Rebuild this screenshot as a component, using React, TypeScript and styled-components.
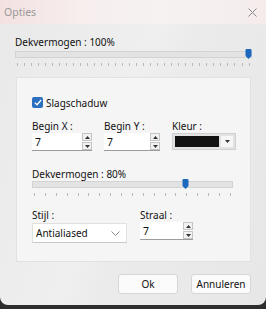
import styled, { createGlobalStyle } from 'styled-components';

const GlobalStyle = createGlobalStyle`
	html, body {
		margin: 0;
		padding: 0;
		background: #2e2e2e;
	}
	body {
		font-family: 'Noto Sans', 'Open Sans', sans-serif;
		font-size: 10px;
		color: #111111;
	}
`;

const Slider = ({ value, ticks }: { value: number; ticks: number }) => (
	<SSliderWrap>
		<STrack>
			<SThumb style={{ left: `calc(${value * 100}% - 4px)` }}>
				<svg width='7' height='10' viewBox='0 0 7 10'>
					<path d='M0.5 1 Q0.5 0 1.5 0 L5.5 0 Q6.5 0 6.5 1 L6.5 7 L3.5 10 L0.5 7 Z' fill='#1c68bd' />
				</svg>
			</SThumb>
		</STrack>
		<STicks>
			{Array.from({ length: ticks }).map((_, i) => (
				<STick key={i} />
			))}
		</STicks>
	</SSliderWrap>
);

const Spin = ({ value, width }: { value: string; width: number }) => (
	<SSpin $width={width}>
		<SSpinText>{value}</SSpinText>
		<SSpinButtons>
			<SSpinButton>
				<svg width='5' height='3' viewBox='0 0 5 3'>
					<path d='M0 3 L2.5 0 L5 3 Z' fill='#333' />
				</svg>
			</SSpinButton>
			<SSpinButton>
				<svg width='5' height='3' viewBox='0 0 5 3'>
					<path d='M0 0 L2.5 3 L5 0 Z' fill='#333' />
				</svg>
			</SSpinButton>
		</SSpinButtons>
	</SSpin>
);

export default function App() {
	return (
		<>
			<GlobalStyle />
			<SWindow>
				<STitleBar>
					<STitle>Opties</STitle>
					<svg width='9' height='9' viewBox='0 0 9 9'>
						<path d='M0.5 0.5 L8.5 8.5 M8.5 0.5 L0.5 8.5' stroke='#8a8a8a' strokeWidth='1' />
					</svg>
				</STitleBar>
				<SContent>
					<SLabel>Dekvermogen : 100%</SLabel>
					<Slider value={0.99} ticks={34} />
					<SGroup>
						<SCheckRow>
							<SCheck>
								<svg width='8' height='7' viewBox='0 0 8 7'>
									<path d='M0.8 3.6 L3 5.8 L7.2 1' stroke='#fff' strokeWidth='1.3' fill='none' />
								</svg>
							</SCheck>
							<span>Slagschaduw</span>
						</SCheckRow>
						<SFieldRow $top={10} $gap={12}>
							<SField $width={60}>
								<SLabel>Begin X :</SLabel>
								<Spin value='7' width={60} />
							</SField>
							<SField $width={56}>
								<SLabel>Begin Y :</SLabel>
								<Spin value='7' width={56} />
							</SField>
							<SField $width={64}>
								<SLabel>Kleur :</SLabel>
								<SColorBox>
									<SSwatch />
									<SColorArrow>
										<svg width='5' height='3' viewBox='0 0 5 3'>
											<path d='M0 0 L2.5 3 L5 0 Z' fill='#333' />
										</svg>
									</SColorArrow>
								</SColorBox>
							</SField>
						</SFieldRow>
						<SSubSlider>
							<SLabel>Dekvermogen : 80%</SLabel>
							<Slider value={0.77} ticks={19} />
						</SSubSlider>
						<SFieldRow $top={12} $gap={13}>
							<SField $width={95}>
								<SLabel>Stijl :</SLabel>
								<SSelect>
									<span>Antialiased</span>
									<svg width='9' height='5' viewBox='0 0 9 5'>
										<path d='M0.5 0.5 L4.5 4.5 L8.5 0.5' stroke='#888' strokeWidth='1' fill='none' />
									</svg>
								</SSelect>
							</SField>
							<SField $width={53}>
								<SLabel>Straal :</SLabel>
								<Spin value='7' width={53} />
							</SField>
						</SFieldRow>
					</SGroup>
				</SContent>
				<SButtons>
					<SButton>Ok</SButton>
					<SButton>Annuleren</SButton>
				</SButtons>
			</SWindow>
		</>
	);
}

const SWindow = styled.div`
	width: 266px;
	height: 305px;
	box-sizing: border-box;
	border-radius: 0 0 8px 8px;
	overflow: hidden;
	display: flex;
	flex-direction: column;
	background: linear-gradient(110deg, #e9e9e9 0%, #efefef 45%, #ebebeb 55%, #e7e7e7 100%);
`;

const STitleBar = styled.div`
	height: 24px;
	flex: none;
	display: flex;
	align-items: center;
	justify-content: space-between;
	padding: 0 9px 0 4px;
	background: linear-gradient(90deg, #f3e1e1 0%, #f7eeee 30%, #f6f2f2 60%, #f5ecec 100%);
`;

const STitle = styled.span`
	font-size: 10.5px;
	color: #9a9a9a;
`;

const SContent = styled.div`
	padding: 11px 14px 0 15px;
	display: flex;
	flex-direction: column;
`;

const SLabel = styled.div`
	line-height: 14px;
	white-space: nowrap;
`;

const SSliderWrap = styled.div`
	margin-top: 2px;
`;

const STrack = styled.div`
	position: relative;
	height: 7px;
	box-sizing: border-box;
	background: #e3e3e3;
	border: 1px solid #d3d3d3;
`;

const SThumb = styled.div`
	position: absolute;
	top: -3px;
	width: 7px;
	height: 10px;
	display: flex;
`;

const STicks = styled.div`
	display: flex;
	justify-content: space-between;
	margin-top: 5px;
	padding: 0 2px;
`;

const STick = styled.div`
	width: 1px;
	height: 3px;
	background: #b8b8b8;
`;

const SGroup = styled.div`
	margin: 11px 1px 0 1px;
	height: 185px;
	box-sizing: border-box;
	background: #f5f5f5;
	border: 1px solid #e2e2e2;
	padding: 18px 15px 0 15px;
	display: flex;
	flex-direction: column;
`;

const SCheckRow = styled.div`
	display: flex;
	align-items: center;
	gap: 3px;
	height: 13px;
`;

const SCheck = styled.div`
	width: 11px;
	height: 11px;
	background: #2b6fbf;
	border-radius: 2px;
	display: flex;
	align-items: center;
	justify-content: center;
`;

const SFieldRow = styled.div<{ $top: number; $gap: number }>`
	display: flex;
	gap: ${(p) => p.$gap}px;
	margin-top: ${(p) => p.$top}px;
`;

const SField = styled.div<{ $width: number }>`
	width: ${(p) => p.$width}px;
	display: flex;
	flex-direction: column;
	gap: 0;
`;

const SSpin = styled.div<{ $width: number }>`
	width: ${(p) => p.$width}px;
	height: 18px;
	box-sizing: border-box;
	display: flex;
	align-items: center;
	background: #ffffff;
	border-bottom: 1px solid #9c9c9c;
`;

const SSpinText = styled.span`
	flex: 1;
	padding-left: 3px;
	font-size: 10.5px;
`;

const SSpinButtons = styled.div`
	display: flex;
	flex-direction: column;
	gap: 1px;
`;

const SSpinButton = styled.div`
	width: 10px;
	height: 8px;
	box-sizing: border-box;
	border: 1px solid #c4c4c4;
	background: #f2f2f2;
	display: flex;
	align-items: center;
	justify-content: center;
`;

const SColorBox = styled.div`
	width: 64px;
	height: 17px;
	box-sizing: border-box;
	border: 1px solid #cfcfcf;
	background: #e2e2e2;
	display: flex;
	align-items: center;
	padding: 2px;
	gap: 2px;
`;

const SSwatch = styled.div`
	flex: 1;
	height: 100%;
	background: #111111;
`;

const SColorArrow = styled.div`
	width: 12px;
	height: 100%;
	background: #f6f6f6;
	display: flex;
	align-items: center;
	justify-content: center;
`;

const SSubSlider = styled.div`
	margin-top: 16px;
	margin-right: 2px;
	& > div:last-child {
		margin-top: 0;
	}
`;

const SSelect = styled.div`
	height: 20px;
	margin-top: 1px;
	box-sizing: border-box;
	background: #ffffff;
	border: 1px solid #e0e0e0;
	border-bottom-color: #c8c8c8;
	display: flex;
	align-items: center;
	justify-content: space-between;
	padding: 0 6px 0 3px;
`;

const SButtons = styled.div`
	display: flex;
	justify-content: flex-end;
	gap: 13px;
	padding: 12px 15px 0 0;
`;

const SButton = styled.button`
	width: 60px;
	height: 20px;
	box-sizing: border-box;
	padding: 0;
	font-family: 'Noto Sans', 'Open Sans', sans-serif;
	font-size: 10px;
	color: #111111;
	background: #fbfbfb;
	border: 1px solid #d6d6d6;
	border-radius: 3px;
`;
